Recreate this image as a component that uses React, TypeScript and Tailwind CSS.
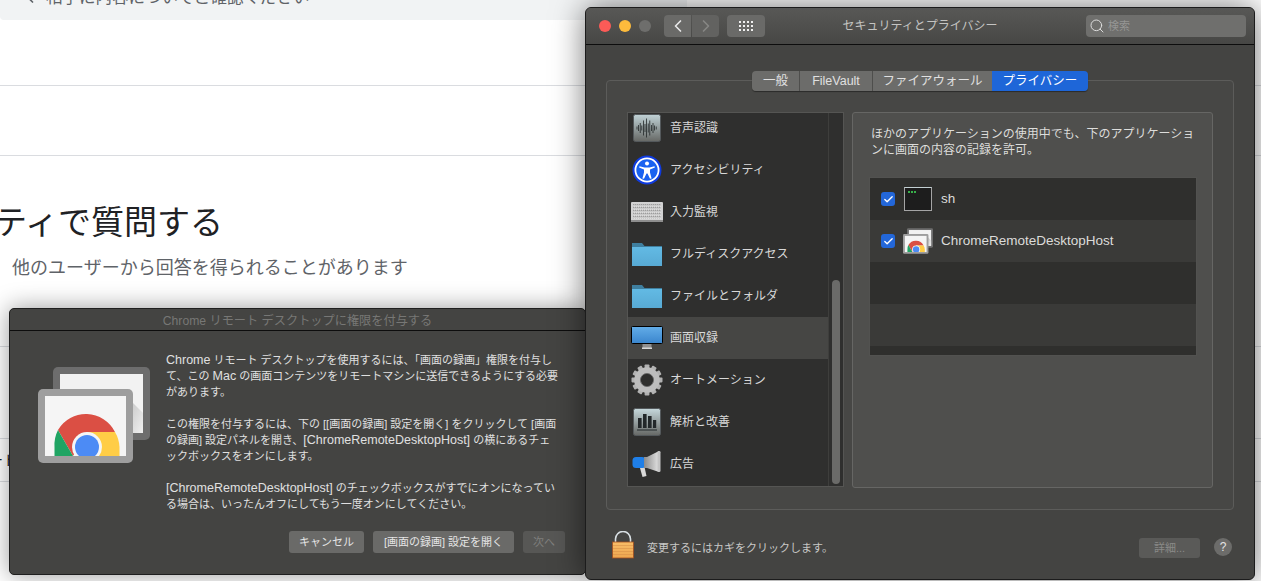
import React from "react";
import { Check, ChevronLeft, ChevronRight, Search } from "lucide-react";

const FONT = "font-['Liberation_Sans','Noto_Sans_CJK_JP',sans-serif]";

function ChromeRemote({ className, id }: { className: string; id: string }) {
  return (
    <svg viewBox="0 0 112 96" className={className}>
      <defs>
        <clipPath id={id}>
          <rect x="7" y="29" width="81" height="60" />
        </clipPath>
        <linearGradient id={id + "s"} x1="0" y1="0" x2="1" y2="1">
          <stop offset="0" stopColor="#bdbdbd" />
          <stop offset="1" stopColor="#f0f0f0" />
        </linearGradient>
      </defs>
      <rect x="15" y="0" width="97" height="73" rx="5" fill="#6d6d6d" />
      <rect x="22" y="7" width="83" height="59" fill="#f2f2f2" />
      <path d="M88 29 L105 46 V66 H88 Z" fill={`url(#${id}s)`} />
      <rect x="0" y="22" width="95" height="74" rx="5" fill="#9e9e9e" />
      <rect x="7" y="29" width="81" height="60" fill="#f5f5f5" />
      <g clipPath={`url(#${id})`}>
        <path d="M20 63 A32.5 32.5 0 0 1 77 65 L49 65 L35 89 Z" fill="#db4f44" />
        <path d="M20 63 A32.5 32.5 0 0 0 16.5 80 V89 H35 Z" fill="#1fa463" />
        <path d="M49 65 H77 A32.5 32.5 0 0 1 81.5 80 V89 H55 Z" fill="#ffcd46" />
        <circle cx="49" cy="80" r="15" fill="#f5f5f5" />
        <circle cx="49" cy="80" r="12" fill="#4c8bf5" />
      </g>
    </svg>
  );
}

function SoundIcon() {
  const h = [3, 6, 10, 5, 15, 8, 19, 9, 15, 6, 10, 5, 3];
  return (
    <svg viewBox="0 0 28 28" className="w-[28px] h-[28px]">
      <defs>
        <linearGradient id="snd" x1="0" y1="0" x2="0" y2="1">
          <stop offset="0" stopColor="#c0d2d6" />
          <stop offset="1" stopColor="#666865" />
        </linearGradient>
      </defs>
      <rect x="0.5" y="0.5" width="27" height="27" rx="2" fill="url(#snd)" stroke="#54595c" />
      {h.map((v, i) => (
        <rect key={i} x={3.6 + i * 1.6} y={14 - v / 2} width="0.8" height={v} fill="#23282a" />
      ))}
    </svg>
  );
}

function AccessIcon() {
  return (
    <svg viewBox="0 0 30 30" className="w-[30px] h-[30px]">
      <circle cx="15" cy="15" r="14.5" fill="#0f3be0" />
      <circle cx="15" cy="15" r="11.6" fill="#1a62f0" stroke="#ffffff" strokeWidth="1.8" />
      <circle cx="15" cy="8.6" r="2" fill="#fff" />
      <path d="M7.5 11.2 L12.5 12.6 H17.5 L22.5 11.2 L22.9 12.6 L18 14.4 V17.6 L19.6 23.4 L18 23.8 L15.5 18.4 H14.5 L12 23.8 L10.4 23.4 L12 17.6 V14.4 L7.1 12.6 Z" fill="#fff" />
    </svg>
  );
}

function KeyboardIcon() {
  return (
    <svg viewBox="0 0 32 20" className="w-[32px] h-[20px]">
      <rect x="0" y="0" width="32" height="20" rx="1" fill="#d2d2d2" />
      <rect x="0" y="18" width="32" height="2" fill="#8e8e8e" />
      {[0, 1, 2, 3, 4].map((r) =>
        Array.from({ length: 14 }).map((_, c) => (
          <rect key={r + "-" + c} x={2.2 + c * 2} y={2.6 + r * 3} width="1.6" height="2.2" fill="#f6f6f6" stroke="#8a8a8a" strokeWidth="0.35" />
        ))
      )}
    </svg>
  );
}

function FolderIcon({ id }: { id: string }) {
  return (
    <svg viewBox="0 0 30 24" className="w-[30px] h-[24px]">
      <defs>
        <linearGradient id={id} x1="0" y1="0" x2="0" y2="1">
          <stop offset="0" stopColor="#62bae4" />
          <stop offset="1" stopColor="#58aad4" />
        </linearGradient>
      </defs>
      <path d="M0 1 H10 L12.5 4 H30 V7 H0 Z" fill="#3f7f9f" />
      <rect x="0" y="5" width="30" height="19" fill={`url(#${id})`} />
    </svg>
  );
}

function MonitorIcon() {
  return (
    <svg viewBox="0 0 32 24" className="w-[32px] h-[24px]">
      <defs>
        <linearGradient id="mon" x1="0" y1="0" x2="0" y2="1">
          <stop offset="0" stopColor="#63ade8" />
          <stop offset="1" stopColor="#3a85cd" />
        </linearGradient>
      </defs>
      <rect x="0.5" y="0.5" width="31" height="17" rx="1" fill="url(#mon)" stroke="#000" />
      <rect x="11.5" y="18" width="9" height="4" fill="#8f8f8f" />
      <rect x="11" y="21.5" width="10" height="1.5" fill="#d8d8d8" />
    </svg>
  );
}

function GearIcon() {
  return (
    <svg viewBox="0 0 32 32" className="w-[32px] h-[32px]">
      {Array.from({ length: 12 }).map((_, i) => (
        <rect key={i} x="13.6" y="0.5" width="4.8" height="8" rx="0.8" fill="#b2b2b2" transform={`rotate(${i * 30} 16 16)`} />
      ))}
      <circle cx="16" cy="16" r="9.6" fill="none" stroke="#bdbdbd" strokeWidth="6.4" />
      <circle cx="16" cy="16" r="6.6" fill="none" stroke="#666" strokeWidth="0.8" />
    </svg>
  );
}

function BarsIcon() {
  return (
    <svg viewBox="0 0 28 28" className="w-[28px] h-[28px]">
      <defs>
        <linearGradient id="bars" x1="0" y1="0" x2="0" y2="1">
          <stop offset="0" stopColor="#c6d8dc" />
          <stop offset="1" stopColor="#666865" />
        </linearGradient>
      </defs>
      <rect x="0.5" y="0.5" width="27" height="27" rx="2" fill="url(#bars)" stroke="#54595c" />
      <rect x="5" y="10" width="3.6" height="10" fill="#23282a" />
      <rect x="10" y="6" width="3.6" height="14" fill="#23282a" />
      <rect x="15" y="8" width="3.6" height="12" fill="#23282a" />
      <rect x="20" y="12" width="3.2" height="8" fill="#23282a" />
      <rect x="4" y="21.5" width="20" height="1" fill="#23282a" />
    </svg>
  );
}

function MegaphoneIcon() {
  return (
    <svg viewBox="0 0 30 26" className="w-[30px] h-[26px]">
      <defs>
        <linearGradient id="mg" x1="0" y1="0" x2="1" y2="0">
          <stop offset="0" stopColor="#8b8b8b" />
          <stop offset="1" stopColor="#e4e4e4" />
        </linearGradient>
      </defs>
      <path d="M8 17 L12.5 16 L14.5 25 L10.5 26 Z" fill="#d9d9d9" />
      <rect x="0.5" y="6" width="13" height="11" rx="3.5" fill="#1f7fe8" />
      <path d="M12 6 H15 L27 0 V21 L15 17 H12 Z" fill="url(#mg)" />
      <rect x="25.5" y="0" width="3" height="21" rx="1.2" fill="#c4c4c4" />
    </svg>
  );
}

const listItems: { label: string; icon: React.ReactNode; selected?: boolean }[] = [
  { label: "音声認識", icon: <SoundIcon /> },
  { label: "アクセシビリティ", icon: <AccessIcon /> },
  { label: "入力監視", icon: <KeyboardIcon /> },
  { label: "フルディスクアクセス", icon: <FolderIcon id="f1" /> },
  { label: "ファイルとフォルダ", icon: <FolderIcon id="f2" /> },
  { label: "画面収録", icon: <MonitorIcon />, selected: true },
  { label: "オートメーション", icon: <GearIcon /> },
  { label: "解析と改善", icon: <BarsIcon /> },
  { label: "広告", icon: <MegaphoneIcon /> },
];

function AppCheck() {
  return (
    <span className="w-[14px] h-[14px] rounded-[3px] bg-[#2367d9] flex items-center justify-center shrink-0">
      <Check className="w-[11px] h-[11px] text-white" strokeWidth={3} />
    </span>
  );
}

function L({ children }: { children: React.ReactNode }) {
  return <span className="text-[12.5px]">{children}</span>;
}

function Page() {
  return (
    <div className="w-full h-full bg-white flex flex-col">
      <div className="w-[687px] h-[20px] shrink-0 bg-[#f1f3f4] rounded-b-[4px] overflow-hidden">
        <div className="-mt-[13px] flex items-center gap-[6px] pl-[20px] h-[20px] text-[16.5px] leading-[20px] text-[#5f6368]">
          <ChevronLeft className="w-[20px] h-[20px] shrink-0" />
          <span>相手に内容についてご確認ください</span>
        </div>
      </div>
      <div className="h-[66px] border-b border-[#dadce0]" />
      <div className="h-[70px] border-b border-[#dadce0]" />
      <div className="pt-[47px] pl-[12px] h-[191px] border-b border-[#dadce0]">
        <div className="-ml-[150px] text-[33px] leading-[40px] text-[#202124] whitespace-nowrap">コミュニティで質問する</div>
        <div className="mt-[13px] text-[18px] leading-[24px] text-[#5f6368]">他のユーザーから回答を得られることがあります</div>
      </div>
      <div className="h-[92px] border-b border-[#dadce0]" />
      <div className="h-[43px] border-b border-[#dadce0] flex items-center text-[14px] text-[#202124] -indent-[11px]">ート</div>
    </div>
  );
}

function Dialog() {
  return (
    <div className="absolute left-[9px] top-[308px] w-[577px] h-[267px] rounded-[5px] bg-[#444442] border border-[#1f1f1f] shadow-[0_0_24px_rgba(0,0,0,0.4)] flex flex-col overflow-hidden">
      <div className="h-[22px] shrink-0 pt-[3px] border-b border-[#0d0d0d] flex items-center justify-center text-[12.2px] text-[#777775]">
        Chrome リモート デスクトップに権限を付与する
      </div>
      <div className="flex pl-[28px]">
        <ChromeRemote id="c1" className="w-[112px] h-[96px] mt-[36px] shrink-0" />
        <div className="ml-[16px] pt-[21px] w-[398px] text-[11px] leading-[16px] text-[#e0e0e0] flex flex-col gap-[16px] whitespace-nowrap">
          <p>
            <L>Chrome</L> リモート デスクトップを使用するには、「画面の録画」権限を付与し<br />
            て、この <L>Mac</L> の画面コンテンツをリモートマシンに送信できるようにする必要<br />
            があります。
          </p>
          <p>
            この権限を付与するには、下の [[画面の録画] 設定を開く] をクリックして [画面<br />
            の録画] 設定パネルを開き、<L>[ChromeRemoteDesktopHost]</L> の横にあるチェ<br />
            ックボックスをオンにします。
          </p>
          <p>
            <L>[ChromeRemoteDesktopHost]</L> のチェックボックスがすでにオンになってい<br />
            る場合は、いったんオフにしてもう一度オンにしてください。
          </p>
        </div>
      </div>
      <div className="mt-auto mb-[21px] pr-[20px] flex justify-end gap-[9px] text-[11px]">
        <div className="w-[75px] h-[22px] rounded-[3px] bg-[#6a6a68] text-[#e4e4e4] flex items-center justify-center">キャンセル</div>
        <div className="w-[141px] h-[22px] rounded-[3px] bg-[#6a6a68] text-[#e4e4e4] flex items-center justify-center">[画面の録画] 設定を開く</div>
        <div className="w-[42px] h-[22px] rounded-[3px] bg-[#575755] text-[#7f7f7d] flex items-center justify-center">次へ</div>
      </div>
    </div>
  );
}

function Prefs() {
  return (
    <div className="absolute left-[585px] top-[7px] w-[670px] h-[573px] rounded-[6px] bg-[#444442] border border-[#1c1c1c] shadow-[0_0_32px_rgba(0,0,0,0.55)] flex flex-col overflow-hidden">
      <div className="relative h-[37px] shrink-0 border-b border-[#0d0d0d] bg-gradient-to-b from-[#585856] to-[#474745] flex items-center pl-[13px] pr-[8px]">
        <span className="w-[12px] h-[12px] rounded-full bg-[#fc5b57]" />
        <span className="w-[12px] h-[12px] rounded-full bg-[#fdbb3c] ml-[8px]" />
        <span className="w-[12px] h-[12px] rounded-full bg-[#6e6e6c] ml-[8px]" />
        <div className="ml-[13px] flex gap-[1px]">
          <div className="w-[27px] h-[22px] rounded-l-[4px] bg-[#6a6a68] flex items-center justify-center">
            <ChevronLeft className="w-[20px] h-[20px] text-[#e8e8e8]" strokeWidth={2} />
          </div>
          <div className="w-[27px] h-[22px] rounded-r-[4px] bg-[#626260] flex items-center justify-center">
            <ChevronRight className="w-[20px] h-[20px] text-[#868684]" strokeWidth={2} />
          </div>
        </div>
        <div className="ml-[8px] w-[38px] h-[22px] rounded-[4px] bg-[#6a6a68] grid grid-cols-4 gap-[2px] px-[12px] py-[6px] content-center">
          {Array.from({ length: 12 }).map((_, i) => (
            <span key={i} className="w-[2px] h-[2px] bg-[#f0f0f0]" />
          ))}
        </div>
        <div className="absolute inset-x-0 text-center text-[12px] text-[#c4c4c2] pointer-events-none">セキュリティとプライバシー</div>
        <div className="ml-auto w-[160px] h-[22px] rounded-[4px] bg-[#6f6f6d] flex items-center pl-[3px] gap-[3px] text-[11px] text-[#969694]">
          <Search className="w-[16px] h-[16px] text-[#dcdcdc]" strokeWidth={1.5} />
          <span>検索</span>
        </div>
      </div>

      <div className="flex-1 relative px-[20px] pt-[35px]">
        <div className="absolute left-[166px] top-[26px] h-[20px] flex rounded-[4px] overflow-hidden text-[12.5px] text-[#e0e0e0] z-10 shadow-[0_1px_1px_rgba(0,0,0,0.4)]">
          <div className="w-[48px] bg-[#6c6c6a] border-r border-[#4e4e4c] flex items-center justify-center">一般</div>
          <div className="w-[73px] bg-[#6c6c6a] border-r border-[#4e4e4c] flex items-center justify-center">FileVault</div>
          <div className="w-[119px] bg-[#6c6c6a] flex items-center justify-center">ファイアウォール</div>
          <div className="w-[96px] bg-[#1e66d8] text-white flex items-center justify-center">プライバシー</div>
        </div>

        <div className="w-[628px] h-[430px] rounded-[4px] border border-[#5c5c5a] bg-[#474745] flex gap-[8px] pl-[20px] pt-[31px]">
          <div className="w-[217px] h-[375px] bg-[#2f2f2e] border border-[#555553] flex overflow-hidden">
            <div className="flex-1 border-r border-[#3e3e3c] overflow-hidden">
              <div className="-mt-[6px] flex flex-col">
                {listItems.map((it) => (
                  <div key={it.label} className={`h-[42px] shrink-0 flex items-center ${it.selected ? "bg-[#464644]" : ""}`}>
                    <span className="w-[38px] flex items-center justify-center shrink-0">{it.icon}</span>
                    <span className="ml-[4px] text-[12px] text-[#d8d8d8]">{it.label}</span>
                  </div>
                ))}
              </div>
            </div>
            <div className="w-[14px] shrink-0 pl-[3px] pr-[3px] pt-[167px] pb-[2px]">
              <div className="w-[8px] h-full rounded-full bg-[#6b6b69]" />
            </div>
          </div>

          <div className="w-[361px] h-[376px] rounded-[3px] border border-[#666664] bg-[#4f4f4d] flex flex-col px-[16px] pt-[13px]">
            <p className="pl-[2px] text-[12px] leading-[16px] text-[#dddddb]">ほかのアプリケーションの使用中でも、下のアプリケーションに画面の内容の記録を許可。</p>
            <div className="mt-[19px] h-[179px] border border-[#525250] bg-[#2f2f2d] flex flex-col overflow-hidden w-[328px]">
              <div className="h-[42px] shrink-0 bg-[#2f2f2d] flex items-center pl-[11px]">
                <AppCheck />
                <div className="ml-[9px] w-[28px] h-[24px] bg-[#1d1d1d] border border-t-[#c3d0d3] border-x-[#a5a5a5] border-b-[#a5a5a5] flex items-start shrink-0 pt-[3px] pl-[3px] gap-[1px]">
                  <span className="w-[2px] h-[2px] bg-[#38b04a]" />
                  <span className="w-[2px] h-[2px] bg-[#38b04a]" />
                  <span className="w-[2px] h-[2px] bg-[#38b04a]" />
                </div>
                <span className="ml-[9px] text-[13.5px] text-[#dcdcda]">sh</span>
              </div>
              <div className="h-[42px] shrink-0 bg-[#3a3a38] flex items-center pl-[11px]">
                <AppCheck />
                <ChromeRemote id="c2" className="ml-[8px] w-[30px] h-[26px] shrink-0" />
                <span className="ml-[8px] text-[13.5px] text-[#dcdcda]">ChromeRemoteDesktopHost</span>
              </div>
              <div className="h-[42px] shrink-0 bg-[#2f2f2d]" />
              <div className="h-[42px] shrink-0 bg-[#3a3a38]" />
            </div>
          </div>
        </div>

        <div className="flex items-start mt-[21px] ml-[6px] h-[30px]">
          <svg viewBox="0 0 22 30" className="w-[22px] h-[30px] shrink-0">
            <defs>
              <linearGradient id="lk" x1="0" y1="0" x2="0" y2="1">
                <stop offset="0" stopColor="#f8bd68" />
                <stop offset="1" stopColor="#eda64f" />
              </linearGradient>
            </defs>
            <path d="M3.5 11 V8 A7.5 7.5 0 0 1 18.5 8 V11" fill="none" stroke="#d8dfe3" strokeWidth="1.6" />
            <rect x="0.5" y="11" width="21" height="16" fill="url(#lk)" stroke="#a34f1e" strokeWidth="0.8" />
            {[14, 17, 20, 23].map((y) => (
              <rect key={y} x="1" y={y} width="20" height="0.6" fill="#d9924a" />
            ))}
          </svg>
          <span className="ml-[13px] mt-[10px] text-[11px] leading-[14px] text-[#c8c8c6]">変更するにはカギをクリックします。</span>
          <div className="ml-auto mt-[7px] w-[61px] h-[20px] rounded-[3px] bg-[#5a5a58] text-[11px] text-[#8a8a88] flex items-center justify-center">詳細...</div>
          <div className="ml-[14px] mr-[2px] mt-[7px] w-[18px] h-[18px] rounded-full bg-[#6c6c6a] text-[12px] text-[#e4e4e4] flex items-center justify-center">?</div>
        </div>
      </div>
    </div>
  );
}

export default function App() {
  return (
    <div className={`relative w-[1261px] h-[581px] overflow-hidden bg-white ${FONT}`}>
      <Page />
      <Dialog />
      <Prefs />
    </div>
  );
}
